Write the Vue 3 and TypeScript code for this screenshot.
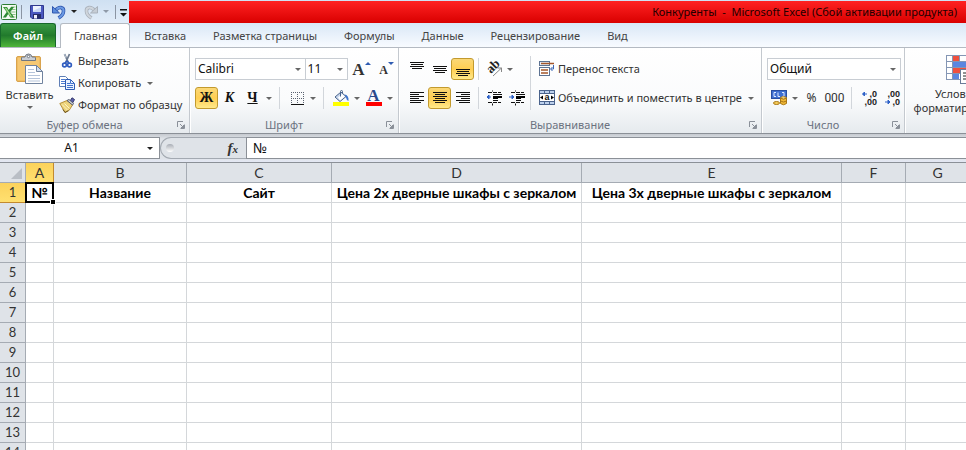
<script setup lang="ts">
import { ref } from 'vue'

interface Column {
  name: string
  width: number
  title: string
}

const caption = 'Конкуренты  -  Microsoft Excel (Сбой активации продукта)'
const tabs: string[] = ['Главная', 'Вставка', 'Разметка страницы', 'Формулы', 'Данные', 'Рецензирование', 'Вид']
const activeTab = ref('Главная')

const columns: Column[] = [
  { name: 'A', width: 28, title: '№' },
  { name: 'B', width: 133, title: 'Название' },
  { name: 'C', width: 145, title: 'Сайт' },
  { name: 'D', width: 250, title: 'Цена 2х дверные шкафы с зеркалом' },
  { name: 'E', width: 260, title: 'Цена 3х дверные шкафы с зеркалом' },
  ...'FGHIJKLMNOPQRSTUVWXYZ'.split('').map((name) => ({ name, width: 64, title: '' })),
]
const tableWidth = 26 + columns.reduce((sum, c) => sum + c.width, 0)
const rowCount = 60

const fontName = ref('Calibri')
const fontSize = ref('11')
const numberFormat = ref('Общий')
const cellAddress = ref('A1')
const formula = ref('№')
</script>

<template>
  <div class="app">
    <header class="titlebar">
      <div class="quick">
        <svg class="i16" viewBox="0 0 16 16">
          <rect x="0.5" y="0.5" width="15" height="15" rx="1" fill="#f4faf2" stroke="#2e7d35" />
          <path d="M10 3h4.500M10 5.500h4.500M10 8h4.500M10 10.500h4.500M10 13h4.500" stroke="#8cc28a" />
          <path d="M2 3h4l1.700 3L10 3h3L9.300 8l4 5.500h-4L7.200 10 5 13.500H1.800L5.700 8z" fill="#2c8a34" />
          <path d="M3.500 3.800h1.800l5.800 8.800H9.400z" fill="#a6dc8c" />
        </svg>
        <span class="bar"></span>
        <button class="q save" aria-label="Сохранить">
          <svg class="i16" viewBox="0 0 16 16">
            <path d="M1.500 1.500h13v13H3l-1.500-1.500z" fill="#4a58c0" stroke="#30398e" />
            <rect x="4" y="2" width="8" height="6" fill="#eef3ff" />
            <path d="M4 7l8-4v5H4z" fill="#cad8f6" />
            <rect x="4" y="10" width="8" height="4.500" fill="#252c66" />
            <rect x="5" y="11" width="3" height="3.500" fill="#eef" />
          </svg>
        </button>
        <button class="q" aria-label="Отменить">
          <svg class="i16" viewBox="0 0 16 16">
            <path d="M4.500 6.500C8 2 13 3 12.500 7.500 12.300 10.500 10 12.500 7.500 14" fill="none" stroke="#3158b0" stroke-width="3.600" />
            <path d="M4.500 6.500C8 2 13 3 12.500 7.500 12.300 10.500 10 12.500 7.500 14" fill="none" stroke="#6c9be4" stroke-width="2" />
            <path d="M1.500 2.500v6.500h7z" fill="#5c8cdb" stroke="#3158b0" />
          </svg>
        </button>
        <span class="arrow dark"></span>
        <button class="q redo" aria-label="Повторить">
          <svg class="i16" viewBox="0 0 16 16">
            <path d="M11.500 6.500C8 2 3 3 3.500 7.500 3.700 10.500 6 12.500 8.500 14" fill="none" stroke="#a9b1bb" stroke-width="3.600" />
            <path d="M11.500 6.500C8 2 3 3 3.500 7.500 3.700 10.500 6 12.500 8.500 14" fill="none" stroke="#cfd5dc" stroke-width="2" />
            <path d="M14.500 2.500v6.500h-7z" fill="#c6cdd5" stroke="#a9b1bb" />
          </svg>
        </button>
        <span class="arrow pale"></span>
        <span class="bar last"></span>
        <button class="q more" aria-label="Настройка панели быстрого доступа">
          <svg width="8" height="8" viewBox="0 0 8 8"><path d="M0 0h7v1.500H0zM0 4h7L3.500 7.500z" fill="#111" /></svg>
        </button>
      </div>
      <h1 class="caption">{{ caption }}</h1>
    </header>

    <nav class="tabs">
      <button class="file">Файл</button>
      <button v-for="tab in tabs" :key="tab" class="tab" :class="{ active: tab === activeTab }" @click="activeTab = tab">
        {{ tab }}
      </button>
    </nav>

    <div class="ribbon">
      <section class="group clipboard">
        <div class="content">
          <button class="paste">
            <svg width="28" height="32" viewBox="0 0 28 32">
              <rect x="0.500" y="3.500" width="24" height="25" rx="1.500" fill="#f0bd62" stroke="#d9a34e" />
              <rect x="2" y="5" width="21" height="22" fill="#f6c873" />
              <path d="M5.500 7.500V5q0-1 1-1h2.500q.5-3 3.500-3t3.500 3h2.500q1 0 1 1v2.500z" fill="#c8cdd4" stroke="#6f7782" />
              <circle cx="12.500" cy="3.500" r="1.200" fill="#fff" stroke="#6f7782" />
              <path d="M9.500 12.500h11l6 6v12h-17z" fill="#fff" stroke="#70839f" />
              <path d="M20.500 12.500v6h6z" fill="#d4e0f0" stroke="#70839f" />
              <path d="M12 16.500h6M12 19.500h7M12 22.500h12M12 25.500h12M12 28h12" stroke="#b5c4da" />
            </svg>
            <span>Вставить</span>
            <i class="arrow"></i>
          </button>
          <div class="commands">
            <button class="cmd">
              <svg class="i16" viewBox="0 0 16 16">
                <path d="M5.500 1l4 9M10.500 1l-4 9" stroke="#6d7b90" stroke-width="1.800" />
                <path d="M5.500 1l1.500 4" stroke="#b9c4d2" />
                <circle cx="5.500" cy="12" r="1.900" fill="none" stroke="#2f5cc0" stroke-width="1.600" />
                <circle cx="10.500" cy="12" r="1.900" fill="none" stroke="#2f5cc0" stroke-width="1.600" />
                <path d="M6 10l2-2 2 2" fill="none" stroke="#2f5cc0" stroke-width="1.500" />
              </svg>
              Вырезать
            </button>
            <button class="cmd">
              <svg class="i16" viewBox="0 0 16 16">
                <path d="M.5 1.500h6l2.500 2.500v7.500H.5z" fill="#fff" stroke="#5f7fb6" />
                <path d="M2 4.500h4M2 6.500h4M2 8.500h4" stroke="#4d7bd0" />
                <path d="M6.500 4.500h5l4 4v6h-9z" fill="#eaf2ff" stroke="#2f5cb2" />
                <path d="M11.500 4.500v4h4M8 8.500h3M8 10.500h6M8 12.500h6" fill="none" stroke="#4373cc" />
              </svg>
              Копировать
              <i class="arrow"></i>
            </button>
            <button class="cmd">
              <svg class="i16" viewBox="0 0 16 16">
                <path d="M10.500 5L13 .800l2.500 1.700L13 7z" fill="#5a5ea8" stroke="#34386e" />
                <path d="M.8 6.500L8 3.500l5.500 4.500-3.500 5.500L6 15.500z" fill="#ecd27a" stroke="#b8913a" />
                <path d="M3 7.500l6 6M5.500 6.500l5 5" stroke="#fff4c0" />
                <path d="M8 3.500l2-1 4.500 4-1 1.500z" fill="#d5d8df" stroke="#555b6a" />
                <path d="M4 12.500L6 15.500l3.500-2" fill="none" stroke="#6b5420" />
              </svg>
              Формат по образцу
            </button>
          </div>
        </div>
        <footer><span>Буфер обмена</span><svg class="launch" viewBox="0 0 8 8"><path d="M.5 6V.5H6M3 3l3 3M7.500 3.500v4h-4" /><path class="fill" d="M7 4v3H4z" /></svg></footer>
      </section>

      <section class="group font">
        <div class="content rows">
          <div class="row">
            <label class="combo name"><select v-model="fontName" aria-label="Шрифт"><option>Calibri</option><option>Arial</option></select><i class="arrow"></i></label>
            <label class="combo size"><select v-model="fontSize" aria-label="Размер шрифта"><option>11</option><option>12</option></select><i class="arrow"></i></label>
            <button class="tool grow" aria-label="Увеличить размер шрифта"><b>A</b><i class="up"></i></button>
            <button class="tool grow shrink" aria-label="Уменьшить размер шрифта"><b>A</b><i class="down"></i></button>
          </div>
          <div class="row">
            <button class="tool letter on">Ж</button>
            <button class="tool letter italic">К</button>
            <button class="tool letter under">Ч</button>
            <i class="arrow"></i>
            <span class="split"></span>
            <button class="tool" aria-label="Границы">
              <svg class="i16" viewBox="0 0 16 16"><path d="M2 2.500h13M2 8.500h13M2.500 2v12M8.500 2v12M14.500 2v12" stroke="#5a6270" stroke-dasharray="1 1" /><path d="M2 14.500h13" stroke="#111" /></svg>
            </button>
            <i class="arrow"></i>
            <span class="split"></span>
            <button class="tool" aria-label="Цвет заливки">
              <svg class="i16" viewBox="0 0 16 16">
                <path d="M2 7l6-5 5 4.500-6 5z" fill="#c9d8ee" stroke="#4a648c" />
                <path d="M5 7.500l4-3.500 3 2.500-5 4z" fill="#fff" />
                <path d="M7.500 6.500V1.500q0-1 1-1t1 1V3" fill="none" stroke="#4a648c" />
                <path d="M11.500 4.500Q16 5 15.500 11q-2-.5-2.500-3.500z" fill="#3e74cc" />
                <rect x="0" y="12" width="16" height="4" fill="#ff0" />
              </svg>
            </button>
            <i class="arrow"></i>
            <button class="tool fontcolor" aria-label="Цвет текста"><b>A</b></button>
            <i class="arrow"></i>
          </div>
        </div>
        <footer><span>Шрифт</span><svg class="launch" viewBox="0 0 8 8"><path d="M.5 6V.5H6M3 3l3 3M7.500 3.500v4h-4" /><path class="fill" d="M7 4v3H4z" /></svg></footer>
      </section>

      <section class="group align">
        <div class="content">
          <div class="rows three">
            <div class="row">
              <button class="tool" aria-label="По верхнему краю"><svg class="i16" viewBox="0 0 16 16"><path d="M1 1.500h14M2 3.500h12M1 5.500h14M3 7.500h10" class="ln" /></svg></button>
              <button class="tool" aria-label="По середине"><svg class="i16" viewBox="0 0 16 16"><path d="M1 5.500h14M2 7.500h12M1 9.500h14M3 11.500h10" class="ln" /></svg></button>
              <button class="tool on" aria-label="По нижнему краю"><svg class="i16" viewBox="0 0 16 16"><path d="M1 8.500h14M2 10.500h12M1 12.500h14M3 14.500h10" class="ln" /></svg></button>
            </div>
            <div class="row">
              <button class="tool" aria-label="По левому краю"><svg class="i16" viewBox="0 0 16 16"><path d="M1 2.500h14M1 4.500h9M1 6.500h14M1 8.500h9M1 10.500h14M1 12.500h11" class="ln" /></svg></button>
              <button class="tool on" aria-label="По центру"><svg class="i16" viewBox="0 0 16 16"><path d="M1 2.500h14M3 4.500h10M1 6.500h14M3 8.500h10M1 10.500h14M3 12.500h10" class="ln" /></svg></button>
              <button class="tool" aria-label="По правому краю"><svg class="i16" viewBox="0 0 16 16"><path d="M1 2.500h14M6 4.500h9M1 6.500h14M6 8.500h9M1 10.500h14M4 12.500h11" class="ln" /></svg></button>
            </div>
          </div>
          <div class="rows splits"><span class="split"></span><span class="split"></span></div>
          <div class="rows indent">
            <div class="row">
              <button class="tool" aria-label="Ориентация">
                <svg class="i16" viewBox="0 0 16 16">
                  <text x="0" y="0" transform="translate(5 13) rotate(-45)" class="ab">ab</text>
                  <path d="M7 15L15.500 7M11.500 7h4v4" fill="none" stroke="#888" />
                </svg>
              </button>
              <i class="arrow"></i>
            </div>
            <div class="row">
              <button class="tool" aria-label="Уменьшить отступ">
                <svg class="i16" viewBox="0 0 16 16"><path d="M2 2.500h4M7 2.500h8M2 12.500h4M7 12.500h8" class="ln" stroke-dasharray="4 1" /><path d="M7 4.500h9M7 10.500h5M6.500 .5v1M6.500 13.500v2" class="ln" /><path d="M7 6h9v2H7zM7 8h5v1H7z" /><path d="M5 7H1M3 5L1 7l2 2z" fill="#2f62c8" stroke="#2f62c8" /></svg>
              </button>
              <button class="tool" aria-label="Увеличить отступ">
                <svg class="i16" viewBox="0 0 16 16"><path d="M2 2.500h4M7 2.500h8M2 12.500h4M7 12.500h8" class="ln" stroke-dasharray="4 1" /><path d="M7 4.500h9M7 10.500h5M6.500 .5v1M6.500 13.500v2" class="ln" /><path d="M7 6h9v2H7zM7 8h5v1H7z" /><path d="M0 7h4M3 5l2 2-2 2z" fill="#2f62c8" stroke="#2f62c8" /></svg>
              </button>
            </div>
          </div>
          <div class="longline"></div>
          <div class="rows merge">
            <button class="cmd">
              <svg class="i16" viewBox="0 0 16 16">
                <rect x=".5" y=".5" width="10" height="4" fill="#e8eff8" stroke="#5d7393" />
                <path d="M2 2.500h13" stroke="#a4572b" stroke-width="1.500" />
                <rect x=".5" y="6.500" width="10" height="8" fill="#fff" stroke="#5d7393" />
                <path d="M2 9h7M2 12h7" stroke="#a4572b" stroke-width="1.500" />
                <path d="M14.500 4v4H12M13.500 6L11.500 8l2 2" fill="none" stroke="#3a67b5" />
              </svg>
              Перенос текста
            </button>
            <button class="cmd">
              <svg class="i16" viewBox="0 0 16 16">
                <rect x=".5" y=".5" width="15" height="14" fill="#bcd0ec" stroke="#4a638c" />
                <path d="M1 3.500h14M1 11.500h14M5.500 1v2M10.500 1v2M5.500 12v2M10.500 12v2" stroke="#4a638c" />
                <rect x="1" y="4" width="14" height="7" fill="#fff" />
                <path d="M1 7.500l3-2v4zM15 7.500l-3-2v4z" />
                <text x="8" y="10" text-anchor="middle" class="a">a</text>
              </svg>
              Объединить и поместить в центре
              <i class="arrow"></i>
            </button>
          </div>
        </div>
        <footer><span>Выравнивание</span><svg class="launch" viewBox="0 0 8 8"><path d="M.5 6V.5H6M3 3l3 3M7.500 3.500v4h-4" /><path class="fill" d="M7 4v3H4z" /></svg></footer>
      </section>

      <section class="group number">
        <div class="content rows">
          <div class="row">
            <label class="combo format"><select v-model="numberFormat" aria-label="Числовой формат"><option>Общий</option><option>Числовой</option></select><i class="arrow"></i></label>
          </div>
          <div class="row">
            <button class="tool" aria-label="Финансовый формат">
              <svg class="i16" viewBox="0 0 16 16">
                <rect x=".5" y=".5" width="15" height="8" fill="#3f6fd0" stroke="#2a4fa0" />
                <path d="M5 2.500H3v4h2M7 2.500v4h2M11 2.500h2v4h-2" fill="none" stroke="#dfeaff" />
                <ellipse cx="12.500" cy="8" rx="3" ry="1.300" fill="#ffe28a" stroke="#a87716" />
                <path d="M9.500 8v5.500q3 2.500 6 0V8q-3 2.500-6 0zM9.500 11q3 2 6 0" fill="#f2b936" stroke="#a87716" />
                <ellipse cx="5.500" cy="13" rx="3" ry="1.500" fill="#f6cc5a" stroke="#a87716" />
              </svg>
            </button>
            <i class="arrow"></i>
            <button class="tool pct">%</button>
            <button class="tool zeros">000</button>
            <span class="split"></span>
            <button class="tool" aria-label="Увеличить разрядность">
              <svg class="i16" viewBox="0 0 16 16"><text x="16" y="7" text-anchor="end" class="dg">,0</text><text x="16" y="15" text-anchor="end" class="dg">,00</text><path d="M6 4H2M3.500 2L1.500 4l2 2z" fill="#2f62c8" stroke="#2f62c8" /></svg>
            </button>
            <button class="tool" aria-label="Уменьшить разрядность">
              <svg class="i16" viewBox="0 0 16 16"><text x="16" y="7" text-anchor="end" class="dg">,00</text><text x="16" y="15" text-anchor="end" class="dg">,0</text><path d="M1 12h4M4 10l2 2-2 2z" fill="#2f62c8" stroke="#2f62c8" /></svg>
            </button>
          </div>
        </div>
        <footer><span>Число</span><svg class="launch" viewBox="0 0 8 8"><path d="M.5 6V.5H6M3 3l3 3M7.500 3.500v4h-4" /><path class="fill" d="M7 4v3H4z" /></svg></footer>
      </section>

      <section class="group styles">
        <button class="paste conditional">
          <svg width="28" height="32" viewBox="0 0 28 32">
            <rect x=".5" y="2.500" width="26" height="24" fill="#fff" stroke="#8496b4" />
            <rect x="7" y="3" width="7" height="6" fill="#f0503e" />
            <rect x="7" y="9" width="20" height="6" fill="#5b86e0" />
            <rect x="7" y="15" width="13" height="6" fill="#f0503e" />
            <rect x="7" y="21" width="6" height="5" fill="#5b86e0" />
            <path d="M1 8.500h26M1 14.500h26M1 20.500h26M6.500 3v24M13.500 3v6M20.500 3v24" stroke="#8496b4" />
            <rect x="14.500" y="16.500" width="14" height="14" fill="#fff" stroke="#6b7c99" />
            <path d="M17 20h6M17 23h6M17 26h6" stroke="#222" />
          </svg>
          <span>Условное форматирование</span>
        </button>
      </section>
    </div>

    <div class="formulabar">
      <label class="namebox"><input v-model="cellAddress" aria-label="Имя ячейки" /><i class="arrow dark"></i></label>
      <div class="fxzone"><span class="knob"></span><button class="fx" aria-label="Вставить функцию">f<small>x</small></button></div>
      <input v-model="formula" class="formula" aria-label="Строка формул" />
    </div>

    <main class="sheet">
      <table :style="{ width: tableWidth + 'px' }">
        <colgroup>
          <col class="rowhead" />
          <col v-for="c in columns" :key="c.name" :style="{ width: c.width + 'px' }" />
        </colgroup>
        <thead>
          <tr>
            <th class="corner"><svg width="11" height="11" viewBox="0 0 11 11"><path d="M11 0v11H0z" fill="#b9bec5" /></svg></th>
            <th v-for="c in columns" :key="c.name" :class="{ current: c.name === 'A' }">{{ c.name }}</th>
          </tr>
        </thead>
        <tbody>
          <tr v-for="r in rowCount" :key="r">
            <th :class="{ current: r === 1 }">{{ r }}</th>
            <td v-for="c in columns" :key="c.name" :class="{ selected: r === 1 && c.name === 'A' }">{{ r === 1 ? c.title : '' }}</td>
          </tr>
        </tbody>
      </table>
    </main>
  </div>
</template>

<style>
body {
  margin: 0;
  overflow: hidden;
}
</style>

<style scoped>
* {
  box-sizing: border-box;
}
.app {
  display: flex;
  flex-direction: column;
  height: 100vh;
  overflow: hidden;
  background: #fff;
  color: #333;
  font: 11px/16px 'Noto Sans', 'Open Sans', sans-serif;
}
button,
input,
select {
  margin: 0;
  padding: 0;
  border: 0;
  background: none;
  color: inherit;
  font: inherit;
}
svg {
  display: block;
  flex: none;
  overflow: visible;
}
.i16 {
  width: 16px;
  height: 16px;
}
.ln {
  stroke: #111;
  fill: none;
}
.arrow {
  flex: none;
  width: 0;
  height: 0;
  border: 3px solid transparent;
  border-top-color: #666;
  border-bottom: 0;
}
.arrow.dark {
  border-top-color: #222;
}
.arrow.pale {
  border-top-color: #8f9aa8;
}

/* title bar */
.titlebar {
  display: flex;
  flex: none;
  height: 23px;
  background: linear-gradient(#cfe0f2, #e2edf9);
}
.quick {
  display: flex;
  align-items: center;
  flex: none;
  width: 129px;
  padding-left: 1px;
}
.bar {
  width: 1px;
  height: 14px;
  margin: 0 7px 0 4px;
  background: #8b95a3;
}
.bar.last {
  margin: 0 4px 0 6px;
}
.q {
  display: flex;
  margin-right: 4px;
}
.q.save {
  margin-right: 6px;
}
.q.redo {
  margin-left: 6px;
}
.q.more {
  margin: 2px 0 0;
}
.caption {
  flex: 1;
  margin: 1px 0 0;
  padding-right: 9px;
  background: linear-gradient(#ff2222, #d90000);
  color: #200;
  font-size: 11px;
  font-weight: 400;
  line-height: 22px;
  text-align: right;
  white-space: pre;
}

/* tabs */
.tabs {
  display: flex;
  flex: none;
  align-items: flex-end;
  height: 25px;
  background: linear-gradient(#d9e7f6, #f8fbff);
  border-bottom: 1px solid #b4bac2;
}
.file {
  width: 56px;
  height: 24px;
  margin-right: 4px;
  border: 1px solid #17682b;
  border-bottom: 0;
  border-radius: 3px 3px 0 0;
  background: linear-gradient(#3a9a44, #217a2c 50%, #4fb63a);
  color: #fff;
  font-weight: 600;
}
.tab {
  height: 24px;
  padding: 0 12px 0 13px;
  border: 1px solid transparent;
  border-bottom: 0;
  border-radius: 3px 3px 0 0;
  color: #444;
  white-space: nowrap;
}
.tab.active {
  height: 25px;
  margin-bottom: -1px;
  border-color: #b4bac2;
  background: #fff;
}

/* ribbon */
.ribbon {
  display: flex;
  flex: none;
  height: 86px;
  overflow: hidden;
  border-bottom: 1px solid #8b9097;
  background: linear-gradient(#fff, #fafbfc 60%, #e6eaee);
}
.group {
  display: flex;
  flex: none;
  flex-direction: column;
  border-right: 1px solid #c4c9cf;
  box-shadow: 1px 0 #fff;
}
.content {
  display: flex;
  flex: 1;
}
.group footer {
  display: flex;
  flex: none;
  align-items: center;
  height: 17px;
  padding-right: 4px;
  color: #6b7280;
}
.group footer span {
  flex: 1;
  padding-right: 8px;
  text-align: center;
}
.launch {
  width: 8px;
  height: 8px;
  fill: none;
  stroke: #8a9099;
}
.launch .fill {
  fill: #8a9099;
}
.clipboard {
  width: 190px;
}
.font {
  width: 209px;
}
.align {
  width: 363px;
}
.number {
  width: 143px;
}
.styles {
  border: 0;
}
.paste {
  display: flex;
  flex-direction: column;
  align-items: center;
  width: 59px;
  padding-top: 5px;
}
.paste span {
  margin: 2px 0 3px;
}
.commands {
  display: flex;
  flex-direction: column;
  padding-top: 2px;
}
.cmd {
  display: flex;
  align-items: center;
  gap: 3px;
  height: 22px;
  white-space: nowrap;
}
.cmd .arrow {
  margin-left: 3px;
}
.rows {
  display: flex;
  flex-direction: column;
  gap: 7px;
  padding-top: 10px;
}
.font .rows,
.number .rows {
  padding-left: 5px;
}
.row {
  display: flex;
  align-items: center;
  height: 22px;
}
.row > .arrow {
  margin: 0 2px;
}
.combo {
  display: flex;
  align-items: center;
  height: 22px;
  padding-right: 4px;
  border: 1px solid #c8cdd3;
  background: #fff;
  color: #111;
  font-size: 12px;
}
.combo select {
  flex: 1;
  min-width: 0;
  padding-left: 2px;
  appearance: none;
  outline: 0;
}
.combo.name {
  width: 112px;
}
.combo.size {
  width: 44px;
  margin-left: -1px;
}
.combo.format {
  width: 134px;
}
.tool {
  display: flex;
  align-items: center;
  justify-content: center;
  flex: none;
  width: 23px;
  height: 22px;
  border: 1px solid transparent;
  border-radius: 3px;
}
.tool.on {
  border-color: #c29a2e;
  background: linear-gradient(#fbd877, #ffce52 50%, #ffe98a);
}
.grow {
  align-items: flex-start;
  margin-left: 2px;
  color: #333;
  font: 700 17px/22px 'Liberation Serif', serif;
}
.grow.shrink {
  font-size: 12px;
}
.up,
.down {
  margin-top: 3px;
  border: 3px solid transparent;
  border-top: 0;
  border-bottom: 3px solid #2f5cb2;
}
.down {
  border-top: 3px solid #2f5cb2;
  border-bottom: 0;
}
.letter {
  color: #111;
  font: 700 14px/20px 'Liberation Serif', serif;
}
.italic {
  font-style: italic;
}
.under {
  text-decoration: underline;
}
.split {
  width: 1px;
  height: 22px;
  margin: 0 5px;
  background: #d2d6db;
}
.fontcolor b {
  width: 16px;
  height: 16px;
  border-bottom: 4px solid #f00;
  color: #2b4a8c;
  font: 700 17px/12px 'Liberation Serif', serif;
}
.three {
  padding-left: 6px;
}
.splits .split {
  margin: 0 3px 0 4px;
}
.longline {
  width: 1px;
  height: 54px;
  margin: 8px 8px 0 2px;
  background: #d2d6db;
}
.ab {
  fill: #222;
  font: 700 13px 'Liberation Serif', serif;
}
.a {
  fill: #111;
  font: 700 9px 'Liberation Sans', sans-serif;
}
.pct,
.zeros {
  font-size: 12px;
}
.zeros {
  font-family: 'Liberation Sans Narrow', Roboto, sans-serif;
}
.dg {
  fill: #222;
  font: 700 9px 'Liberation Sans', sans-serif;
}
.conditional {
  width: 110px;
}
.conditional span {
  line-height: 14px;
}

/* formula bar */
.formulabar {
  display: flex;
  flex: none;
  height: 28px;
  padding: 3px 0;
  background: linear-gradient(#c5c9cf, #dfe3e8 5px 24px, #e4e8f4);
  color: #111;
  font-size: 12px;
}
.namebox {
  display: flex;
  align-items: center;
  width: 160px;
  padding-right: 6px;
  border: 1px solid #8b9097;
  border-left: 0;
  background: #fff;
}
.namebox input {
  flex: 1;
  min-width: 0;
  padding-right: 4px;
  text-align: center;
}
.fxzone {
  display: flex;
  align-items: center;
  justify-content: space-between;
  width: 86px;
  padding: 0 8px 0 5px;
  border: 1px solid #a3a9b1;
  border-right: 0;
  border-radius: 11px 0 0 11px;
  background: #dfe3e8;
}
.knob {
  width: 8px;
  height: 8px;
  border-radius: 50%;
  background: linear-gradient(#a8adb5, #fff);
}
.fx {
  color: #333;
  font: italic 700 15px/18px 'Liberation Serif', serif;
}
.fx small {
  font-size: 11px;
}
.formula {
  flex: 1;
  min-width: 0;
  padding-left: 6px;
  border: 1px solid #8b9097;
  border-right: 0;
  background: #fff;
  font-size: 14px;
}

/* sheet */
.sheet {
  flex: 1;
  min-height: 0;
  overflow: hidden;
  border-top: 1px solid #8b9097;
}
table {
  table-layout: fixed;
  border-spacing: 0;
  font: 14px/19px Lato, 'Open Sans', sans-serif;
}
.rowhead {
  width: 26px;
}
th,
td {
  height: 20px;
  padding: 0;
  border-right: 1px solid #d4d7da;
  border-bottom: 1px solid #d4d7da;
  text-align: center;
  white-space: nowrap;
}
td {
  color: #000;
  font-weight: 700;
}
th {
  border-color: #a5abb3;
  background: #dfe3e8;
  color: #333;
  font-weight: 400;
}
tbody th {
  font-size: 13px;
}
.corner svg {
  margin: 2px 3px 0 auto;
}
th.current {
  border-color: #c28a30;
  background: linear-gradient(#fbd25c, #ffe070);
}
.selected {
  position: relative;
}
.selected::before {
  position: absolute;
  inset: -1px;
  border: 2px solid #000;
  content: '';
}
.selected::after {
  position: absolute;
  right: -2px;
  bottom: -2px;
  width: 4px;
  height: 4px;
  background: #000;
  outline: 1px solid #fff;
  content: '';
}
</style>
